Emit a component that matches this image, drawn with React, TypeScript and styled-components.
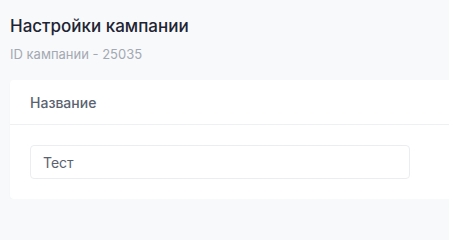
import React from 'react';
import styled, { createGlobalStyle } from 'styled-components';

const GlobalStyle = createGlobalStyle`
  html, body {
    margin: 0;
    padding: 0;
    background: #f8f9fa;
    font-family: Inter, "Noto Sans", sans-serif;
  }
`;

const Page = styled.div`
  padding: 14px 0 0 10px;
  overflow: hidden;
`;

const Title = styled.h1`
  margin: 0;
  font-size: 17px;
  font-weight: 500;
  line-height: 24px;
  color: #1e2433;
`;

const Subtitle = styled.div`
  margin-top: 8px;
  font-size: 13px;
  line-height: 16px;
  color: #a3a8b3;
`;

const Card = styled.section`
  margin-top: 18px;
  width: 460px;
  background: #ffffff;
  border-radius: 4px;
  box-shadow: 0 1px 2px rgba(0, 0, 0, 0.03);
`;

const CardHeader = styled.div`
  height: 44px;
  padding: 0 20px;
  display: flex;
  align-items: center;
  border-bottom: 1px solid #eef0f2;
  font-size: 14px;
  font-weight: 500;
  color: #5a6270;
`;

const CardBody = styled.div`
  padding: 20px 20px 20px;
`;

const Input = styled.input`
  box-sizing: border-box;
  display: block;
  width: 380px;
  height: 34px;
  padding: 0 12px;
  border: 1px solid #ebedf0;
  border-radius: 4px;
  font-family: inherit;
  font-size: 14px;
  color: #5a6270;
  background: #fff;
  outline: none;
`;

export default function App() {
  return (
    <>
      <GlobalStyle />
      <Page>
        <Title>Настройки кампании</Title>
        <Subtitle>ID кампании - 25035</Subtitle>
        <Card>
          <CardHeader>Название</CardHeader>
          <CardBody>
            <Input defaultValue="Тест" />
          </CardBody>
        </Card>
      </Page>
    </>
  );
}
